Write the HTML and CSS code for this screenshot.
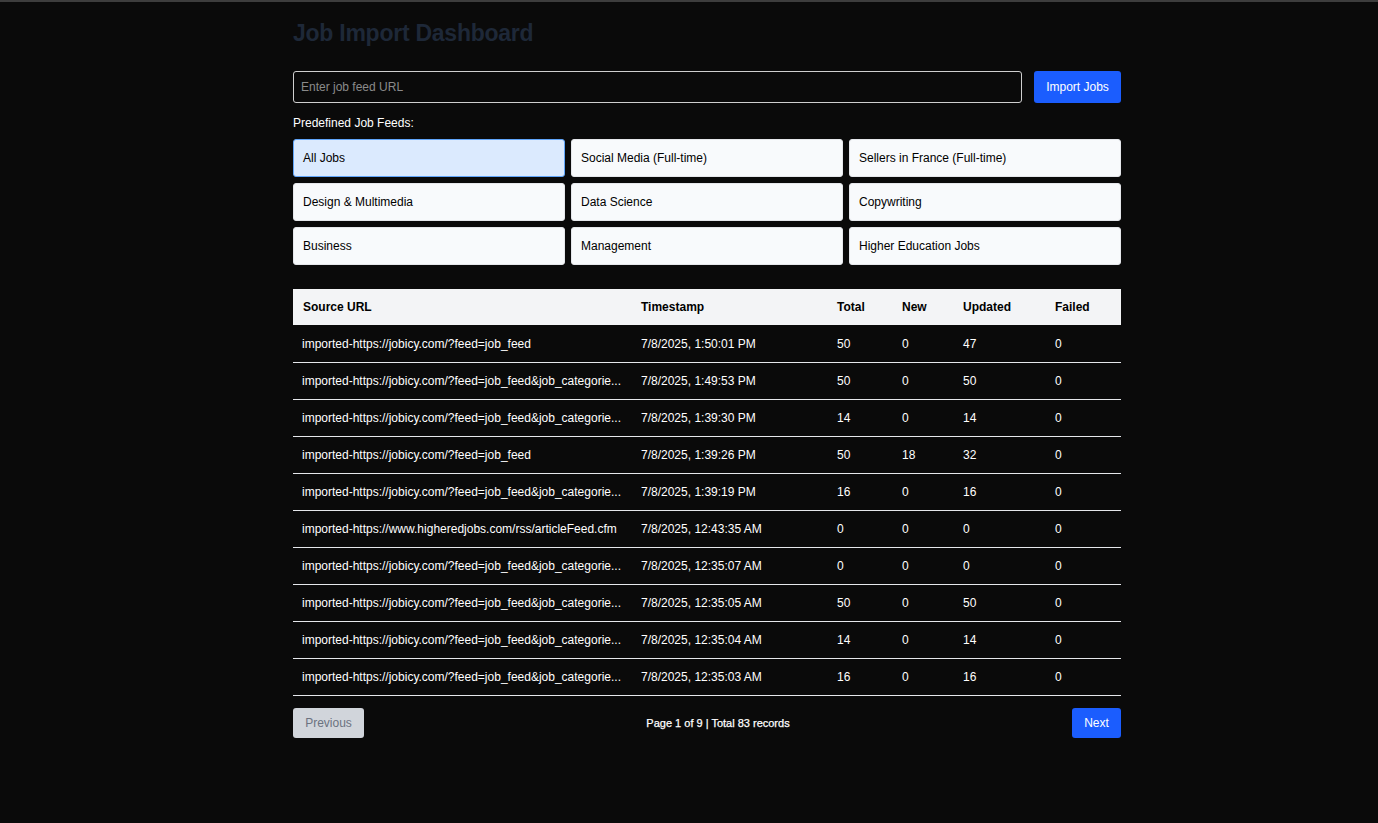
FILE: index.html
```html
<!DOCTYPE html>
<html lang="en">
<head>
<meta charset="utf-8">
<title>Job Import Dashboard</title>
<link rel="stylesheet" href="styles.css">
</head>
<body>
<div class="topbar"></div>
<main class="container">
  <h1 class="title">Job Import Dashboard</h1>
  <div class="import-row">
    <input class="url-input" type="text" placeholder="Enter job feed URL">
    <button class="btn btn-primary import-btn">Import Jobs</button>
  </div>
  <div class="feeds-label">Predefined Job Feeds:</div>
  <div class="feeds-grid">
    <button class="feed feed-active">All Jobs</button>
    <button class="feed">Social Media (Full-time)</button>
    <button class="feed">Sellers in France (Full-time)</button>
    <button class="feed">Design &amp; Multimedia</button>
    <button class="feed">Data Science</button>
    <button class="feed">Copywriting</button>
    <button class="feed">Business</button>
    <button class="feed">Management</button>
    <button class="feed">Higher Education Jobs</button>
  </div>
  <table class="logs">
    <colgroup>
      <col class="c-src"><col class="c-ts"><col class="c-total"><col class="c-new"><col class="c-upd"><col class="c-fail">
    </colgroup>
    <thead>
      <tr><th>Source URL</th><th>Timestamp</th><th>Total</th><th>New</th><th>Updated</th><th>Failed</th></tr>
    </thead>
    <tbody>
      <tr><td>imported-https://jobicy.com/?feed=job_feed</td><td>7/8/2025, 1:50:01 PM</td><td>50</td><td>0</td><td>47</td><td>0</td></tr>
      <tr><td>imported-https://jobicy.com/?feed=job_feed&amp;job_categorie...</td><td>7/8/2025, 1:49:53 PM</td><td>50</td><td>0</td><td>50</td><td>0</td></tr>
      <tr><td>imported-https://jobicy.com/?feed=job_feed&amp;job_categorie...</td><td>7/8/2025, 1:39:30 PM</td><td>14</td><td>0</td><td>14</td><td>0</td></tr>
      <tr><td>imported-https://jobicy.com/?feed=job_feed</td><td>7/8/2025, 1:39:26 PM</td><td>50</td><td>18</td><td>32</td><td>0</td></tr>
      <tr><td>imported-https://jobicy.com/?feed=job_feed&amp;job_categorie...</td><td>7/8/2025, 1:39:19 PM</td><td>16</td><td>0</td><td>16</td><td>0</td></tr>
      <tr><td>imported-https://www.higheredjobs.com/rss/articleFeed.cfm</td><td>7/8/2025, 12:43:35 AM</td><td>0</td><td>0</td><td>0</td><td>0</td></tr>
      <tr><td>imported-https://jobicy.com/?feed=job_feed&amp;job_categorie...</td><td>7/8/2025, 12:35:07 AM</td><td>0</td><td>0</td><td>0</td><td>0</td></tr>
      <tr><td>imported-https://jobicy.com/?feed=job_feed&amp;job_categorie...</td><td>7/8/2025, 12:35:05 AM</td><td>50</td><td>0</td><td>50</td><td>0</td></tr>
      <tr><td>imported-https://jobicy.com/?feed=job_feed&amp;job_categorie...</td><td>7/8/2025, 12:35:04 AM</td><td>14</td><td>0</td><td>14</td><td>0</td></tr>
      <tr><td>imported-https://jobicy.com/?feed=job_feed&amp;job_categorie...</td><td>7/8/2025, 12:35:03 AM</td><td>16</td><td>0</td><td>16</td><td>0</td></tr>
    </tbody>
  </table>
  <div class="pager">
    <button class="btn btn-disabled">Previous</button>
    <span class="pager-info">Page 1 of 9 | Total 83 records</span>
    <button class="btn btn-primary btn-next">Next</button>
  </div>
</main>
</body>
</html>
```

FILE: styles.css
```css
* { box-sizing: border-box; }

html, body {
  margin: 0;
  padding: 0;
  background: #0a0a0a;
  font-family: "Liberation Sans", Arial, sans-serif;
  color: #ffffff;
}

.topbar {
  height: 2px;
  background: #3d3d3d;
}

.container {
  width: 828px;
  margin-left: calc(50% - 396px);
  padding-top: 15px;
  padding-bottom: 40px;
}

.title {
  margin: 0 0 22px 0;
  font-size: 23px;
  letter-spacing: -0.25px;
  line-height: 32px;
  font-weight: 700;
  color: #1e2838;
}

.import-row {
  display: flex;
  gap: 12px;
  height: 32px;
}

.url-input {
  flex: 1;
  height: 32px;
  background: transparent;
  border: 1px solid #cfcfcf;
  border-radius: 3px;
  padding: 0 7px;
  font-family: inherit;
  font-size: 12px;
  color: #ffffff;
  outline: none;
}
.url-input::placeholder { color: #8a8a8a; }

.btn {
  border: none;
  border-radius: 3px;
  font-family: inherit;
  font-size: 12px;
  height: 30px;
  padding: 0;
  cursor: pointer;
}

.btn-primary {
  background: #1b5dfe;
  color: #ffffff;
}

.import-btn {
  width: 87px;
  height: 32px;
}

.btn-next {
  width: 49px;
}

.btn-disabled {
  background: #d1d5db;
  color: #6b7280;
  width: 71px;
}

.feeds-label {
  margin-top: 12px;
  font-size: 12px;
  line-height: 16px;
  color: #ffffff;
}

.feeds-grid {
  margin-top: 8px;
  display: grid;
  grid-template-columns: repeat(3, 1fr);
  gap: 6px;
}

.feed {
  height: 38px;
  background: #f8fafc;
  border: 1px solid #e5e7eb;
  border-radius: 3px;
  text-align: left;
  padding: 0 9px;
  font-family: inherit;
  font-size: 12px;
  color: #000000;
  cursor: pointer;
}

.feed-active {
  background: #dbeafe;
  border-color: #60a5fa;
}

.logs {
  margin-top: 24px;
  width: 100%;
  border-collapse: collapse;
  table-layout: fixed;
  font-size: 12px;
}

.c-src { width: 338px; }
.c-ts { width: 196px; }
.c-total { width: 65px; }
.c-new { width: 61px; }
.c-upd { width: 92px; }
.c-fail { width: 76px; }

.logs thead tr {
  background: #f3f4f6;
}

.logs th {
  height: 36px;
  padding: 0 10px;
  text-align: left;
  font-weight: 700;
  color: #000000;
}

.logs td {
  height: 37px;
  padding: 1px 10px 0 10px;
  color: #ffffff;
  border-bottom: 1px solid #e5e7eb;
  white-space: nowrap;
  overflow: hidden;
  text-overflow: ellipsis;
}

.logs td:first-child {
  padding-left: 9px;
}

.pager {
  margin-top: 12px;
  display: flex;
  align-items: center;
  justify-content: space-between;
}

.pager-info {
  font-size: 11px;
  font-weight: 400;
  -webkit-text-stroke: 0.25px #ffffff;
  color: #ffffff;
}
```
